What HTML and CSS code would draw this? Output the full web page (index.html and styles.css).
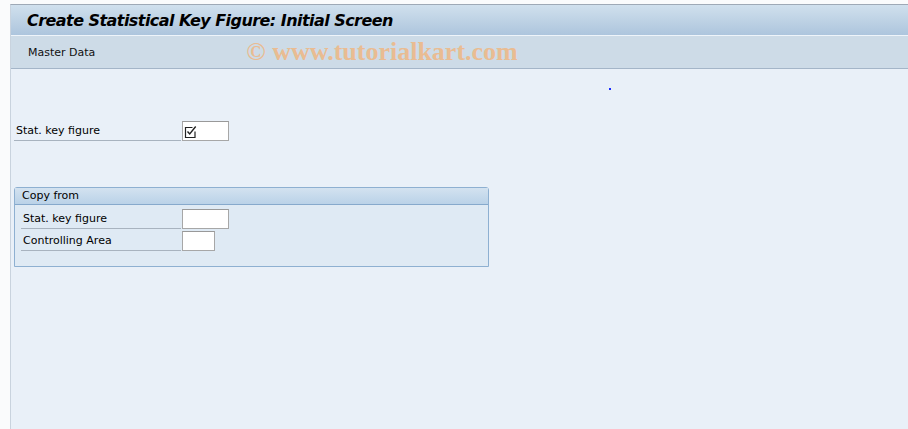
FILE: index.html
```html
<!DOCTYPE html>
<html lang="en">
  <head>
    <meta charset="UTF-8" />
    <title>Create Statistical Key Figure: Initial Screen</title>
    <link rel="stylesheet" href="styles.css">
  </head>
  <body>
    <div class="screen">
      <div class="title-bar">
        <h1>Create Statistical Key Figure: Initial Screen</h1>
      </div>
      <div class="toolbar">
        <span class="menu-item">Master Data</span>
        <span class="watermark">&copy; www.tutorialkart.com</span>
      </div>

      <div class="content">
        <div class="marker-row"><span class="dot"></span></div>

        <div class="field-row main-row">
          <label class="field-label wide">Stat. key figure</label>
          <div class="input long">
            <svg class="check" width="13" height="13" viewBox="0 0 13 13">
              <path d="M1.5 2.5h7M1.5 2v10.5h9.5v-6" fill="none" stroke="#222" stroke-width="1.2"/>
              <path d="M3.5 6.5l2.2 2.5l6-7.5" fill="none" stroke="#222" stroke-width="1.4"/>
            </svg>
          </div>
        </div>

        <fieldset class="group">
          <div class="group-title">Copy from</div>
          <div class="group-body">
            <div class="field-row">
              <label class="field-label">Stat. key figure</label>
              <div class="input long"></div>
            </div>
            <div class="field-row">
              <label class="field-label">Controlling Area</label>
              <div class="input short"></div>
            </div>
          </div>
        </fieldset>
      </div>
    </div>
  </body>
</html>
```

FILE: styles.css
```css
body {
  margin: 0;
  background-color: #fafbfc;
  font-family: "DejaVu Sans", Tahoma, sans-serif;
  font-size: 11px;
  color: #000;
}

.screen {
  margin: 4px 0 0 10px;
  height: 425px;
  border-left: 1px solid #c9d3de;
  border-top: 1px solid #9ea9b6;
  background-color: #e9f0f8;
  box-sizing: border-box;
}

.title-bar {
  height: 30px;
  padding-left: 16px;
  display: flex;
  align-items: center;
  background: linear-gradient(#d0e0ed, #adc5dd);
  border-bottom: 1px solid #eef4fa;
}

h1 {
  margin: 0;
  font-size: 16px;
  font-weight: bold;
  font-style: italic;
  color: #000;
  letter-spacing: -0.55px;
}

.toolbar {
  height: 32px;
  display: flex;
  align-items: center;
  background-color: #cddbe7;
  border-bottom: 1px solid #a4b5c8;
}

.menu-item {
  margin-left: 17px;
  color: #111;
}

.watermark {
  margin-left: 151px;
  font-family: "Liberation Serif", "DejaVu Serif", serif;
  font-weight: bold;
  font-size: 26px;
  color: #e9bc92;
}

.content {
  padding-left: 3px;
}

.marker-row {
  height: 18px;
  position: relative;
}

.dot {
  position: absolute;
  left: 595px;
  top: 19px;
  width: 2px;
  height: 2px;
  background-color: #1a2cff;
}

.field-row {
  display: flex;
  align-items: flex-end;
  height: 20px;
  margin-bottom: 2px;
}

.main-row {
  margin-top: 34px;
}

.field-label {
  width: 158px;
  height: 19px;
  line-height: 19px;
  padding-left: 2px;
  border-bottom: 1px solid #a8b3bf;
  box-sizing: content-box;
}

.field-label.wide {
  width: 165px;
}

.input {
  background-color: #fff;
  border: 1px solid #a7a7a7;
  border-top-color: #999;
  box-sizing: border-box;
  height: 20px;
  margin-left: 1px;
  display: flex;
  align-items: center;
}

.input.long {
  width: 47px;
}

.input.short {
  width: 33px;
}

.check {
  margin-left: 1px;
}

.group {
  margin: 46px 0 0 0;
  padding: 0;
  width: 475px;
  height: 80px;
  border: 1px solid #8eb0d1;
  border-radius: 3px 3px 0 0;
  background-color: #dfeaf4;
  box-sizing: border-box;
}

.group-title {
  height: 16px;
  line-height: 16px;
  padding-left: 7px;
  background: linear-gradient(#d3e2f0, #bad2e8);
  border-bottom: 1px solid #86a9cc;
}

.group-body {
  padding: 4px 0 0 6px;
}

.group-body .field-row {
  margin-bottom: 2px;
}
```
